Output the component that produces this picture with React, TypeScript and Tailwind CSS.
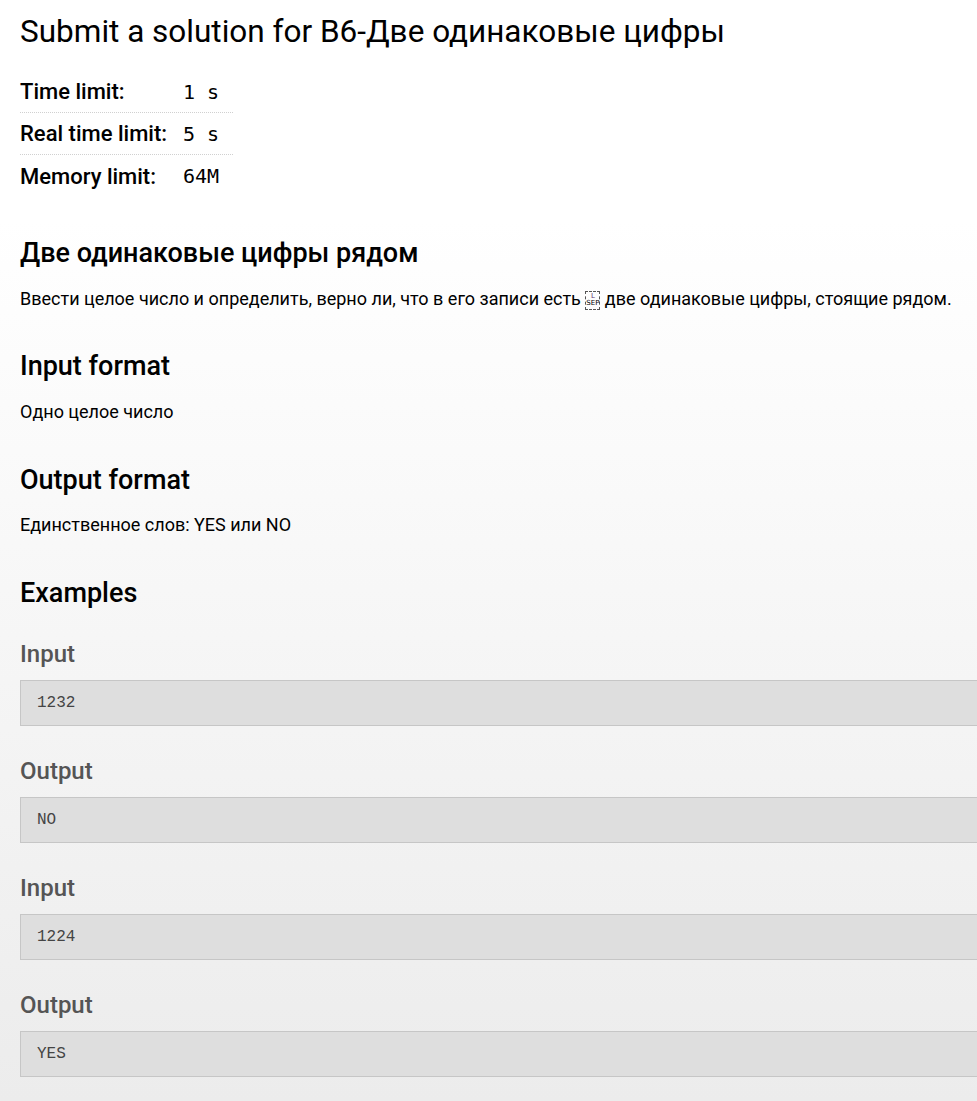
import React from 'react';

const sans = "font-['Roboto','Liberation_Sans',sans-serif]";

function Limit({ label, value, last }: { label: string; value: string; last?: boolean }) {
  return (
    <div className={`flex h-[42px] items-center ${last ? '' : 'border-b border-dotted border-[#d0d0d0]'}`}>
      <div className="w-[163px] text-[22px] font-medium text-black">{label}</div>
      <div className="font-['DejaVu_Sans_Mono',monospace] text-[20px] text-black pr-[14px]">{value}</div>
    </div>
  );
}

function Example({ title, value }: { title: string; value: string }) {
  return (
    <div className="mt-[31px]">
      <h4 className="text-[24px] leading-[28px] font-medium text-[#555]">{title}</h4>
      <pre className="mt-[12px] w-[1100px] border border-[#c6c6c6] bg-[#dedede] px-[16px] py-[10px] font-['Liberation_Mono',monospace] text-[16px] leading-[24px] text-[#444]">
        {value}
      </pre>
    </div>
  );
}

export default function App() {
  return (
    <div className={`min-h-screen overflow-hidden bg-gradient-to-b from-white from-20% to-[#ececec] ${sans}`}>
      <div className="pl-[20px] pt-[14px] pb-[24px]">
        <h1 className="text-[31.5px] leading-[36px] font-normal text-black">
          Submit a solution for B6-Две одинаковые цифры
        </h1>

        {/* limits */}
        <div className="mt-[21px] inline-flex flex-col">
          <Limit label="Time limit:" value="1 s" />
          <Limit label="Real time limit:" value="5 s" />
          <Limit label="Memory limit:" value="64M" last />
        </div>

        <h2 className="mt-[40px] text-[27px] leading-[32px] font-medium text-black">Две одинаковые цифры рядом</h2>
        <p className="mt-[18px] text-[18px] leading-[24px] text-black">
          Ввести целое число и определить, верно ли, что в его записи есть{' '}
          <span className="inline-flex h-[19px] w-[15px] flex-col items-center justify-center border border-dashed border-[#555] align-middle font-['DejaVu_Sans',sans-serif] text-[7px] leading-[7px]">
            <span className="text-[#603070]">L</span>
            <span>SEP</span>
          </span>{' '}
          две одинаковые цифры, стоящие рядом.
        </p>

        <h3 className="mt-[39px] text-[27px] leading-[32px] font-medium text-black">Input format</h3>
        <p className="mt-[18px] text-[18px] leading-[24px] text-black">Одно целое число</p>

        <h3 className="mt-[40px] text-[27px] leading-[32px] font-medium text-black">Output format</h3>
        <p className="mt-[17px] text-[18px] leading-[24px] text-black">Единственное слов: YES или NO</p>

        <h3 className="mt-[40px] text-[27px] leading-[32px] font-medium text-black">Examples</h3>
        <Example title="Input" value="1232" />
        <Example title="Output" value="NO" />
        <Example title="Input" value="1224" />
        <Example title="Output" value="YES" />
      </div>
    </div>
  );
}
